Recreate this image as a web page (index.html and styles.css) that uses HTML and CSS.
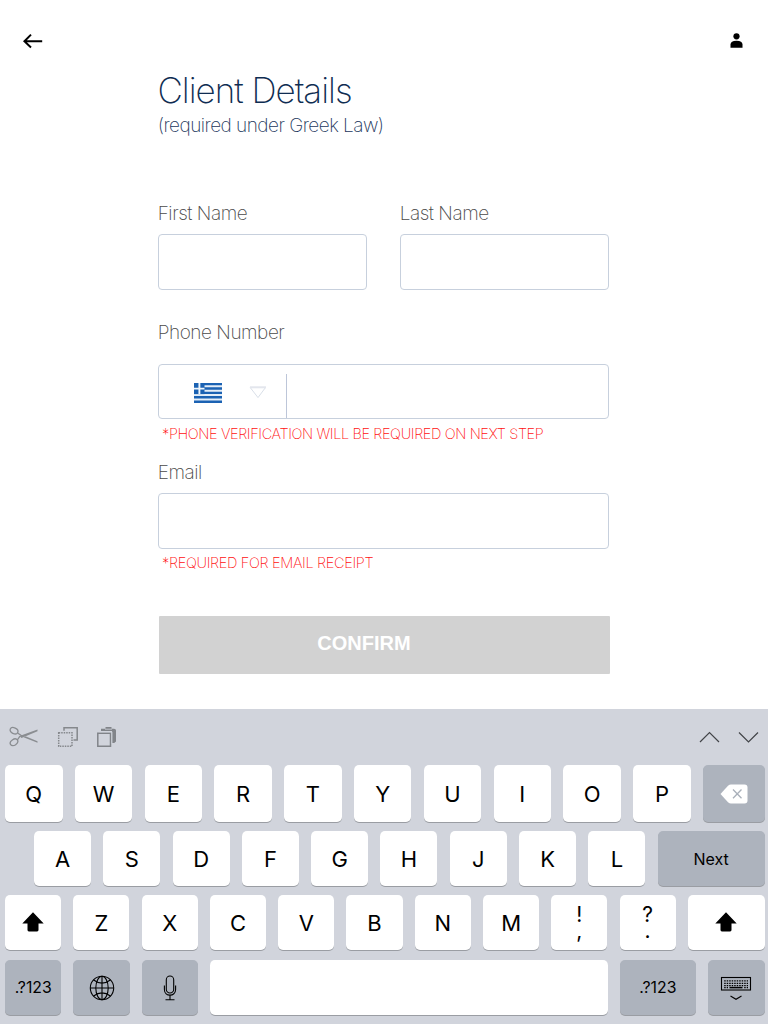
FILE: index.html
```html
<!DOCTYPE html>
<html lang="en">
<head>
<meta charset="utf-8">
<title>Client Details</title>
<link rel="stylesheet" href="styles.css">
</head>
<body>
<div class="screen">
  <header class="topbar">
    <svg class="back" width="20" height="16" viewBox="0 0 20 16"><path d="M19.2 8.200H2M8 1.600L1.400 8.200L8 14.400" fill="none" stroke="#000" stroke-width="2"/></svg>
    <svg class="user" width="13" height="16" viewBox="0 0 13 16"><circle cx="6.500" cy="3.300" r="3.100"/><path d="M.5 14.700V11.500C.5 9 2.500 7.700 6.500 7.700S12.500 9 12.500 11.500V14.700Z"/></svg>
  </header>
  <main class="form">
    <h1 class="title">Client Details</h1>
    <p class="subtitle">(required under Greek Law)</p>
    <div class="names">
      <div class="field"><label class="label first">First Name</label><div class="input"></div></div>
      <div class="field"><label class="label last">Last Name</label><div class="input"></div></div>
    </div>
    <label class="label phone">Phone Number</label>
    <div class="input phone-input">
      <div class="country">
        <svg class="flag" width="28" height="20" viewBox="0 0 28 20"><rect width="28" height="20" fill="#e4eef8"/><path d="M0 1.100H28M0 5.500H28M0 9.900H28M0 14.300H28M0 18.700H28" stroke="#1b62b3" stroke-width="2.400"/><rect width="10.500" height="11.100" fill="#1b62b3"/><path d="M5.400 0V11.100M0 5.600H10.500" stroke="#eff6fc" stroke-width="1.900"/></svg>
        <svg class="caret" width="18" height="13" viewBox="0 0 18 13"><path d="M1.200 1.500H16.500L9 11.600Z" fill="#fff" stroke="#d9dfe8" stroke-width="1"/><path d="M1 1.300H17" stroke="#e3e6ed" stroke-width="2"/></svg>
      </div>
    </div>
    <p class="note n1">*PHONE VERIFICATION WILL BE REQUIRED ON NEXT STEP</p>
    <label class="label email">Email</label>
    <div class="input"></div>
    <p class="note n2">*REQUIRED FOR EMAIL RECEIPT</p>
    <button class="confirm">CONFIRM</button>
  </main>
  <section class="keyboard">
    <div class="tools">
      <div class="tool-group">
        <svg width="30" height="24" viewBox="0 0 30 24" fill="none" stroke="#8a8d91" stroke-width="1.300"><ellipse cx="5" cy="5.700" rx="4.100" ry="2.900" transform="rotate(25 5 5.700)"/><ellipse cx="5" cy="17.300" rx="4.100" ry="2.900" transform="rotate(-35 5 17.300)"/><path d="M8.600 8L13 11M8.200 15.100L11 11.200"/><path d="M10.500 11L28.500 4.500V6.300L12.500 13ZM14.500 12.300L17 11.400L28.500 16.300V17.800Z" fill="#8a8d91" stroke="none"/></svg>
        <svg width="22" height="22" viewBox="0 0 22 22" fill="none" stroke="#85888c" stroke-width="1.500"><path d="M7 4.800V1.700H20.200V14H16.500"/><path d="M1.700 6.800H15V20.300H1.700Z" stroke-dasharray="1.500 1"/></svg>
        <svg width="22" height="22" viewBox="0 0 22 22"><path d="M5 5V2.700H9.500V1H15.500V2.700H18Q20 2.700 20 4.500V15.500L18.200 17H16V5Z" fill="#818489"/><path d="M9 3.200H16" stroke="#d1d4dc" stroke-width=".8"/><path d="M1.800 7.300H14.500V20.200H1.800Z" fill="#d1d4dc" stroke="#818489" stroke-width="1.500"/><path d="M3.500 5.800H16V18" fill="none" stroke="#d1d4dc" stroke-width=".8"/></svg>
      </div>
      <svg class="chevrons" width="60" height="14" viewBox="0 0 60 14" fill="none" stroke="#424448" stroke-width="1.200"><path d="M1 12L10.500 2.500L20 12M40 2.500L49.500 12L59 2.500"/></svg>
    </div>
    <div class="row r1">
      <div class="key">Q</div><div class="key">W</div><div class="key">E</div><div class="key">R</div><div class="key">T</div><div class="key">Y</div><div class="key">U</div><div class="key">I</div><div class="key">O</div><div class="key">P</div>
      <div class="key dark grow"><svg width="28" height="20" viewBox="0 0 28 20"><path d="M.5 10L8 1.800Q9.500.5 11 .5H24.500Q27.500.5 27.500 3.500V16.500Q27.500 19.500 24.500 19.500H11Q9.500 19.500 8 18.200Z" fill="#fff"/><path d="M13 5.500L21.500 14.300M21.500 5.500L13 14.300" stroke="#a9b0ba" stroke-width="1.300"/></svg></div>
    </div>
    <div class="row r2">
      <div class="key">A</div><div class="key">S</div><div class="key">D</div><div class="key">F</div><div class="key">G</div><div class="key">H</div><div class="key">J</div><div class="key">K</div><div class="key">L</div>
      <div class="key dark grow small">Next</div>
    </div>
    <div class="row r3">
      <div class="key"><svg class="shift" width="22" height="20" viewBox="0 0 22 20"><path d="M11 .3L21.700 11.600H16.500V18Q16.500 19.400 15.100 19.400H6.900Q5.500 19.400 5.500 18V11.600H.3Z"/></svg></div><div class="key">Z</div><div class="key">X</div><div class="key">C</div><div class="key">V</div><div class="key">B</div><div class="key">N</div><div class="key">M</div>
      <div class="key dual"><span>!<br>,</span></div><div class="key dual"><span>?<br>.</span></div>
      <div class="key grow"><svg class="shift" width="22" height="20" viewBox="0 0 22 20"><path d="M11 .3L21.700 11.600H16.500V18Q16.500 19.400 15.100 19.400H6.900Q5.500 19.400 5.500 18V11.600H.3Z"/></svg></div>
    </div>
    <div class="row r4">
      <div class="key dark small">.?123</div>
      <div class="key dark"><svg width="26" height="26" viewBox="0 0 26 26" fill="none" stroke="#000" stroke-width="1.100"><circle cx="13" cy="13" r="11.700"/><ellipse cx="13" cy="13" rx="6.200" ry="11.700"/><path d="M13 1.300V24.700M1.300 13H24.700M4.600 5Q13 11.200 21.400 5M4.600 21Q13 14.800 21.400 21"/></svg></div>
      <div class="key dark"><svg width="14" height="26" viewBox="0 0 14 26" fill="none" stroke="#000" stroke-width="1.100"><rect x="3.300" y="1" width="7.400" height="17" rx="3.700"/><path d="M1.400 10.500V14.500C1.400 22 12.600 22 12.600 14.500V10.500M7 20.200V24.500M2.500 24.700H11.500"/></svg></div>
      <div class="key space"></div>
      <div class="key dark small wide">.?123</div>
      <div class="key dark"><svg width="32" height="24" viewBox="0 0 32 24" fill="none" stroke="#000"><rect x="1.500" y="1.500" width="29" height="12.500" stroke-width="1.100"/><path d="M4.200 4.800H28M4.200 7.300H28M4.200 9.700H28" stroke-width="1.300" stroke-dasharray="1.500 1"/><path d="M9.500 11.600H22.500" stroke-width="1.500"/><path d="M4.200 11.700H8M24.200 11.700H28" stroke-width="1.200" stroke-dasharray="1.500 1"/><path d="M10.500 20L16 23.300L21.500 20" stroke-width="1.100"/></svg></div>
    </div>
  </section>
</div>
</body>
</html>
```
FILE: styles.css
```css
* { box-sizing: border-box; }
body { margin: 0; background: #fff; font-family: Inter, "Liberation Sans", sans-serif; }
h1, p { margin: 0; }
.screen { width: 768px; height: 1024px; display: flex; flex-direction: column; overflow: hidden; }
.topbar { height: 69px; padding: 33px 25px 0 23px; display: flex; justify-content: space-between; align-items: flex-start; }
.form { width: 451px; height: 640px; margin-left: 158px; display: flex; flex-direction: column; white-space: nowrap; }
.title { font-size: 35px; font-weight: 150; line-height: 42px; height: 42px; color: #0f2d52; letter-spacing: -1px; text-indent: -.6px; }
.subtitle { font-size: 19px; font-weight: 200; line-height: 24px; height: 24px; margin-top: 3px; color: #1b365c; letter-spacing: -.54px; text-indent: -.3px; }
.names { display: flex; gap: 33px; margin-top: 64px; }
.field { flex: 1; }
.label { display: block; font-size: 19px; font-weight: 200; line-height: 24px; height: 24px; color: #4a4a4a; letter-spacing: -.47px; text-indent: -.3px; flex-shrink: 0; }
.field .label { margin-bottom: 8px; }
.input { height: 56px; border: 1px solid #c7d0dd; border-radius: 4px; flex-shrink: 0; }
.phone { margin-top: 31px; margin-bottom: 19px; }
.phone-input { height: 55px; }
.country { width: 128px; height: 44px; margin-top: 9px; border-right: 1px solid #bdc6d9; display: flex; align-items: flex-start; padding: 9px 0 0 35px; }
.caret { margin: 3px 0 0 27px; }
.note { font-size: 14.5px; font-weight: 200; color: #ff1010; line-height: 18px; height: 18px; padding-left: 4px; letter-spacing: -.38px; }
.n1 { margin-top: 6px; }
.email { margin-top: 18px; margin-bottom: 8px; }
.n2 { margin-top: 5px; letter-spacing: -.33px; }
.confirm { margin: 44px 0 0 1px; width: 451px; height: 58px; border: 0; border-radius: 1px; padding: 0 41px 3px 0; background: #d2d2d2; color: #fff; font: bold 20px "Liberation Sans", Arial, sans-serif; flex-shrink: 0; }
.keyboard { height: 315px; flex-shrink: 0; background: #d1d4dc; }
.tools { height: 56px; display: flex; justify-content: space-between; align-items: center; padding: 0 9px 0 9px; }
.tool-group { display: flex; align-items: center; gap: 17.5px; }
.row { display: flex; padding: 0 3.5px 0 5px; }
.key { width: 57px; height: 100%; flex-shrink: 0; background: #fff; border-radius: 5px; box-shadow: 0 1px 0 #9a9da3; display: flex; align-items: center; justify-content: center; font-size: 22px; font-weight: 370; color: #000; padding-top: 1px; }
.dark { background: #adb3bd; }
.grow { flex: 1; }
.small { font-size: 16px; }
.r1 { height: 57px; gap: 12.3px; }
.r1 .key:not(.grow) { width: 57.5px; }
.r2 { height: 55px; gap: 12.3px; margin-top: 9px; padding-left: 34px; }
.r3 { height: 55px; gap: 12.1px; margin-top: 9px; }
.r3 .key:not(.grow) { width: 56.2px; }
.r3 .shift { margin-bottom: 2px; }
.r4 { height: 55px; gap: 12px; margin-top: 10px; }
.r4 .key { width: 56.4px; }
.r4 .small { padding-top: 0; font-size: 15.8px; }
.r4 .space { flex: 1; }
.r4 .wide { width: 76.5px; }
.r3 .dual { font-size: 21px; line-height: 16px; text-align: center; padding-top: 0; }
```
